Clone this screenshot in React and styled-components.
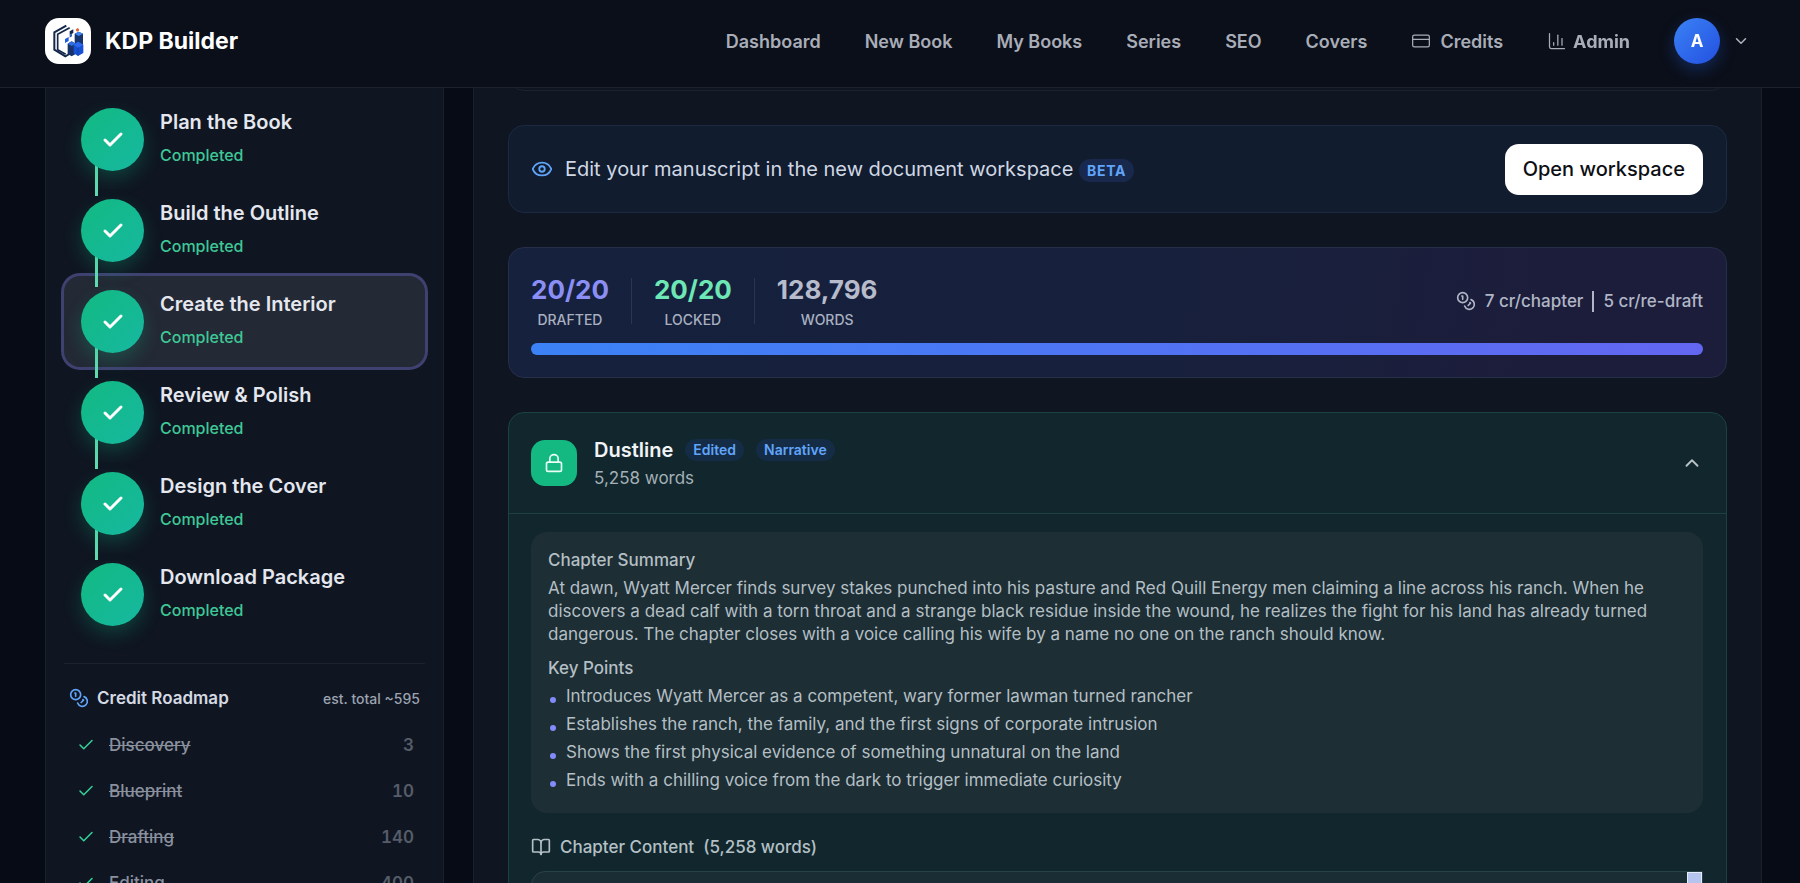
import React from 'react';
import styled, { createGlobalStyle } from 'styled-components';
import {
  BookOpen,
  ChartColumn,
  Check,
  ChevronDown,
  ChevronUp,
  Coins,
  CreditCard,
  Eye,
  Lock,
} from 'lucide-react';

const NAV_ITEMS = [
  { label: 'Dashboard' },
  { label: 'New Book' },
  { label: 'My Books' },
  { label: 'Series' },
  { label: 'SEO' },
  { label: 'Covers' },
  { label: 'Credits', icon: CreditCard },
  { label: 'Admin', icon: ChartColumn, strong: true },
];

const STEPS = [
  'Plan the Book',
  'Build the Outline',
  'Create the Interior',
  'Review & Polish',
  'Design the Cover',
  'Download Package',
];
const ACTIVE_STEP = 'Create the Interior';

const ROADMAP = [
  { name: 'Discovery', cost: 3 },
  { name: 'Blueprint', cost: 10 },
  { name: 'Drafting', cost: 140 },
  { name: 'Editing', cost: 400 },
];

const KEY_POINTS = [
  'Introduces Wyatt Mercer as a competent, wary former lawman turned rancher',
  'Establishes the ranch, the family, and the first signs of corporate intrusion',
  'Shows the first physical evidence of something unnatural on the land',
  'Ends with a chilling voice from the dark to trigger immediate curiosity',
];

const LogoMark = () => (
  <svg width="31" height="34" viewBox="40 32 93 102" aria-hidden="true">
    <g fill="none" stroke="#14284b">
      <path d="M80 37 44 57v52l33 20 12-7" strokeWidth="6" />
      <path d="M90 43 54 63v46l24 14" strokeWidth="5" />
    </g>
    <path d="M90 54l11-6v11l-11 6z" fill="#14284b" />
    <path d="M76 77l11-6v12l-11 6z" fill="#1d5fe0" />
    <path d="M90 65l7-4v8l-7 4z" fill="#2d5fb8" />
    <path d="M105 61l12-6 13 6v33h-25z" fill="#17346c" />
    <path d="M105 61l12-6 13 6-13 7z" fill="#3f86f0" />
    <path d="M84 91l12-7 12 7v31l-12 7-12-7z" fill="#173268" />
    <path d="M84 91l12-7 12 7-12 7z" fill="#2f6fe0" />
    <path d="M102 94l13-9 16 9v25l-16 9-13-8z" fill="#1650d4" />
    <path d="M102 94l13-9 16 9-16 9z" fill="#2c68ee" />
    <path d="M115 103v24" stroke="#1a3c90" strokeWidth="2" />
    <path d="M109 48l5-4 4 3v5l-5 3-4-3z" fill="#e2683c" />
  </svg>
);

const Header = () => (
  <HeaderBar>
    <Brand href="#">
      <LogoBox>
        <LogoMark />
      </LogoBox>
      KDP Builder
    </Brand>
    <Nav>
      {NAV_ITEMS.map(({ label, icon: Icon, strong }) => (
        <NavLink key={label} href="#" $strong={strong}>
          {Icon && <Icon size={20} strokeWidth={1.5} />}
          {label}
        </NavLink>
      ))}
      <AccountButton type="button" aria-label="Account menu">
        <Avatar>A</Avatar>
        <ChevronDown size={18} strokeWidth={2} />
      </AccountButton>
    </Nav>
  </HeaderBar>
);

const Sidebar = () => (
  <SidebarPanel>
    <StepList>
      {STEPS.map((step) => (
        <StepItem key={step} $active={step === ACTIVE_STEP}>
          <StepCircle>
            <Check size={24} strokeWidth={3} />
          </StepCircle>
          <div>
            <StepTitle>{step}</StepTitle>
            <StepStatus>Completed</StepStatus>
          </div>
        </StepItem>
      ))}
    </StepList>
    <Roadmap>
      <RoadmapHeader>
        <Coins size={20} strokeWidth={2} />
        <RoadmapTitle>Credit Roadmap</RoadmapTitle>
        <RoadmapTotal>est. total ~595</RoadmapTotal>
      </RoadmapHeader>
      <ul>
        {ROADMAP.map(({ name, cost }) => (
          <RoadmapRow key={name}>
            <Check size={18} strokeWidth={2} />
            <RoadmapName>{name}</RoadmapName>
            <RoadmapCost>{cost}</RoadmapCost>
          </RoadmapRow>
        ))}
      </ul>
    </Roadmap>
  </SidebarPanel>
);

const Chapter = () => (
  <ChapterCard>
    <ChapterHeader>
      <LockBox>
        <Lock size={20} strokeWidth={2} />
      </LockBox>
      <ChapterHeading>
        <TitleRow>
          <ChapterTitle>Dustline</ChapterTitle>
          <Tag>Edited</Tag>
          <Tag>Narrative</Tag>
        </TitleRow>
        <WordCount>5,258 words</WordCount>
      </ChapterHeading>
      <CollapseButton type="button" aria-label="Collapse chapter">
        <ChevronUp size={22} strokeWidth={2} />
      </CollapseButton>
    </ChapterHeader>
    <ChapterBody>
      <SummaryBox>
        <SummaryHeading>Chapter Summary</SummaryHeading>
        <SummaryText>
          At dawn, Wyatt Mercer finds survey stakes punched into his pasture and Red Quill Energy men
          claiming a line across his ranch. When he discovers a dead calf with a torn throat and a
          strange black residue inside the wound, he realizes the fight for his land has already
          turned dangerous. The chapter closes with a voice calling his wife by a name no one on the
          ranch should know.
        </SummaryText>
        <SummaryHeading>Key Points</SummaryHeading>
        <ul>
          {KEY_POINTS.map((point) => (
            <KeyPoint key={point}>{point}</KeyPoint>
          ))}
        </ul>
      </SummaryBox>
      <ContentLabel htmlFor="chapter-content">
        <BookOpen size={20} strokeWidth={2} />
        Chapter Content <span>(5,258 words)</span>
      </ContentLabel>
      <ContentFrame>
        <ContentArea id="chapter-content" />
        <ScrollThumb />
      </ContentFrame>
    </ChapterBody>
  </ChapterCard>
);

const App = () => {
  return (
    <>
      <GlobalStyle />
      <Header />
      <Page>
        <Sidebar />
        <MainPanel>
          <ToolbarCard />
          <WorkspaceCard>
            <Eye size={22} strokeWidth={2} />
            <WorkspaceText>
              Edit your manuscript in the new document workspace <BetaBadge>BETA</BetaBadge>
            </WorkspaceText>
            <OpenButton type="button">Open workspace</OpenButton>
          </WorkspaceCard>
          <ProgressCard>
            <StatsRow>
              <Stat $color="#8b8ff5">
                <strong>20/20</strong>
                <span>Drafted</span>
              </Stat>
              <StatDivider />
              <Stat $color="#6ee7b7">
                <strong>20/20</strong>
                <span>Locked</span>
              </Stat>
              <StatDivider />
              <Stat $color="#b6bccb">
                <strong>128,796</strong>
                <span>Words</span>
              </Stat>
              <Pricing>
                <Coins size={20} strokeWidth={2} />
                <span>7 cr/chapter</span>
                <PricingDivider />
                <span>5 cr/re-draft</span>
              </Pricing>
            </StatsRow>
            <ProgressBar />
          </ProgressCard>
          <Chapter />
        </MainPanel>
      </Page>
    </>
  );
};

export default App;

const GlobalStyle = createGlobalStyle`
  * {
    box-sizing: border-box;
    margin: 0;
    padding: 0;
  }
  html {
    background: #060b16;
  }
  body {
    height: 100vh;
    overflow: hidden;
    font-family: Inter, 'Liberation Sans', sans-serif;
    font-size: 16px;
    color: #e5e7ef;
  }
  ul, ol {
    list-style: none;
  }
  button, textarea {
    font: inherit;
    border: 0;
  }
  svg {
    flex-shrink: 0;
  }
`;

const HeaderBar = styled.header`
  position: fixed;
  top: 0;
  left: 0;
  right: 0;
  z-index: 10;
  height: 88px;
  padding: 0 50px 5px 45px;
  display: flex;
  align-items: center;
  justify-content: space-between;
  background: #0b0f19;
  border-bottom: 1px solid #1b212d;
`;
const Brand = styled.a`
  display: flex;
  align-items: center;
  gap: 14px;
  color: #fff;
  font-size: 23px;
  font-weight: 700;
  text-decoration: none;
`;
const LogoBox = styled.span`
  width: 46px;
  height: 46px;
  border-radius: 14px;
  display: flex;
  align-items: center;
  justify-content: center;
  background: #fff;
`;
const Nav = styled.nav`
  display: flex;
  align-items: center;
  gap: 44px;
`;
const NavLink = styled.a`
  display: flex;
  align-items: center;
  gap: ${({ $strong }) => ($strong ? '6px' : '9px')};
  color: #a9adb8;
  font-size: 18px;
  font-weight: ${({ $strong }) => ($strong ? 700 : 600)};
  text-decoration: none;
`;
const AccountButton = styled.button`
  display: flex;
  align-items: center;
  gap: 12px;
  background: none;
  color: #b1b5c0;
`;
const Avatar = styled.span`
  width: 46px;
  height: 46px;
  border-radius: 50%;
  display: flex;
  align-items: center;
  justify-content: center;
  color: #fff;
  font-size: 17px;
  font-weight: 700;
  background: linear-gradient(135deg, #3b82f6, #2350e0);
  box-shadow: 0 6px 16px rgba(37, 99, 235, 0.3);
`;

const Page = styled.div`
  display: grid;
  grid-template-columns: 399px minmax(0, 1fr);
  gap: 29px;
  padding: 0 38px 0 45px;
`;
const SidebarPanel = styled.aside`
  padding: 94px 18px 0;
  background: #0f1622;
  border: 1px solid #1a202c;
  border-width: 0 1px;
`;
const StepList = styled.ol`
  margin-bottom: 23px;
`;
const StepItem = styled.li`
  position: relative;
  display: flex;
  gap: 16px;
  height: 91px;
  padding: 14px 17px;
  border-radius: 16px;
  background: ${({ $active }) => ($active ? '#232935' : 'transparent')};
  box-shadow: ${({ $active }) => ($active ? '0 0 0 3px #3f4170' : 'none')};

  &:not(:last-child)::after {
    content: '';
    position: absolute;
    z-index: 1;
    left: 31px;
    top: 68px;
    width: 3px;
    height: 34px;
    background: #5fdcae;
  }
`;
const StepCircle = styled.span`
  position: relative;
  z-index: 2;
  flex: none;
  width: 63px;
  height: 63px;
  border-radius: 50%;
  display: flex;
  align-items: center;
  justify-content: center;
  color: #fff;
  background: linear-gradient(135deg, #12b981, #16b8a0);
  box-shadow: 0 8px 18px rgba(16, 185, 129, 0.25);
`;
const StepTitle = styled.h3`
  font-size: 20px;
  line-height: 28px;
  font-weight: 600;
`;
const StepStatus = styled.p`
  margin-top: 8px;
  color: #3fc896;
  font-size: 16px;
  line-height: 23px;
  font-weight: 500;
`;
const Roadmap = styled.section`
  border-top: 1px solid #1b222e;
  padding-top: 22px;
`;
const RoadmapHeader = styled.div`
  display: flex;
  align-items: center;
  height: 24px;
  padding: 0 5px;
  margin-bottom: 12px;
  color: #60a5fa;
`;
const RoadmapTitle = styled.h4`
  margin-left: 8px;
  color: #d5d9e3;
  font-size: 17px;
  font-weight: 600;
`;
const RoadmapTotal = styled.span`
  margin-left: auto;
  color: #9ca3b1;
  font-size: 14px;
  font-weight: 500;
`;
const RoadmapRow = styled.li`
  display: flex;
  align-items: center;
  height: 46px;
  padding: 0 11px 0 13px;
  font-size: 17px;
  font-weight: 500;
  color: #34d399;
`;
const RoadmapName = styled.span`
  margin-left: 14px;
  color: #8a909d;
  text-decoration: line-through;
`;
const RoadmapCost = styled.span`
  margin-left: auto;
  color: #565c69;
  font-weight: 600;
  font-variant-numeric: tabular-nums;
`;

const MainPanel = styled.main`
  padding: 0 34px 34px;
  display: flex;
  flex-direction: column;
  gap: 34px;
  background: #0f1622;
  border: 1px solid #1a202c;
  border-width: 0 1px;
`;
const Card = styled.section`
  border: 1px solid #1f2939;
  border-radius: 16px;
`;
const ToolbarCard = styled(Card)`
  height: 91px;
  border-color: #1b212d;
`;
const WorkspaceCard = styled(Card)`
  display: flex;
  align-items: center;
  gap: 12px;
  height: 88px;
  padding: 0 23px 0 22px;
  color: #60a5fa;
  background: #111c2e;
  border-color: #1b2942;
`;
const WorkspaceText = styled.p`
  flex: 1;
  color: #d0d7e4;
  font-size: 20px;
`;
const BetaBadge = styled.span`
  padding: 3px 8px;
  border-radius: 12px;
  color: #60a5fa;
  background: #18294d;
  font-size: 14px;
  font-weight: 700;
  letter-spacing: 0.05em;
`;
const OpenButton = styled.button`
  height: 51px;
  padding: 0 18px;
  border-radius: 14px;
  background: #fff;
  color: #0d0f14;
  font-size: 20px;
  font-weight: 500;
`;

const ProgressCard = styled(Card)`
  padding: 23px 23px 22px 22px;
  background: linear-gradient(100deg, #15213d, #17203c 55%, #1c1d3b 85%);
  border-color: #262f48;
`;
const StatsRow = styled.div`
  display: flex;
  align-items: center;
  gap: 22px;
  height: 60px;
  margin-bottom: 12px;
`;
const Stat = styled.div`
  display: flex;
  flex-direction: column;
  align-items: center;
  padding-top: 2px;

  strong {
    color: ${({ $color }) => $color};
    font-size: 26px;
    line-height: 36px;
    font-weight: 700;
  }
  span {
    color: #a9b0c0;
    font-size: 14px;
    line-height: 24px;
    font-weight: 500;
    text-transform: uppercase;
  }
`;
const StatDivider = styled.span`
  width: 1px;
  height: 46px;
  background: #2b3550;
`;
const Pricing = styled.div`
  margin-left: auto;
  display: flex;
  align-items: center;
  gap: 9px;
  color: #b0b6c6;
  font-size: 17px;
  font-weight: 500;
`;
const PricingDivider = styled.span`
  width: 2px;
  height: 21px;
  background: #b0b6c6;
`;
const ProgressBar = styled.div`
  height: 12px;
  border-radius: 6px;
  background: linear-gradient(90deg, #3b82f6, #6366f1);
`;

const ChapterCard = styled(Card)`
  background: #11272d;
  border-color: #1a4244;
`;
const ChapterHeader = styled.div`
  display: flex;
  align-items: center;
  gap: 17px;
  height: 101px;
  padding: 0 23px 0 22px;
  border-bottom: 1px solid #1d4143;
`;
const LockBox = styled.span`
  width: 46px;
  height: 46px;
  border-radius: 14px;
  display: flex;
  align-items: center;
  justify-content: center;
  color: #e9fff6;
  background: #13b981;
`;
const ChapterHeading = styled.div`
  flex: 1;
`;
const TitleRow = styled.div`
  display: flex;
  align-items: center;
  gap: 12px;
  height: 30px;
`;
const ChapterTitle = styled.h2`
  color: #f1f4f7;
  font-size: 20px;
  font-weight: 600;
`;
const Tag = styled.span`
  padding: 0 8px;
  border-radius: 12px;
  color: #60a5fa;
  background: #142c45;
  font-size: 14px;
  line-height: 22px;
  font-weight: 600;
`;
const WordCount = styled.p`
  color: #a4b0b6;
  font-size: 17px;
  line-height: 26px;
`;
const CollapseButton = styled.button`
  display: flex;
  background: none;
  color: #b9c3c8;
`;
const ChapterBody = styled.div`
  padding: 18px 23px 23px 22px;
`;
const SummaryBox = styled.div`
  padding: 17px 17px 16px;
  border-radius: 16px;
  background: #1d2e35;
  color: #b4bfc4;
  font-size: 17px;
  line-height: 23px;
`;
const SummaryHeading = styled.h4`
  margin-bottom: 5px;
  font-size: 17px;
  font-weight: 500;
`;
const SummaryText = styled.p`
  margin-bottom: 11px;
`;
const KeyPoint = styled.li`
  display: flex;
  align-items: center;
  gap: 10px;
  margin-bottom: 5px;

  &::before {
    content: '';
    width: 6px;
    height: 6px;
    margin: 7px 0 0 2px;
    border-radius: 50%;
    background: #818cf8;
  }
`;
const ContentLabel = styled.label`
  display: flex;
  align-items: center;
  gap: 9px;
  margin: 22px 0 12px;
  height: 24px;
  color: #b4c0c5;
  font-size: 17px;
  font-weight: 500;
`;
const ContentFrame = styled.div`
  display: flex;
  height: 400px;
  border: 1px solid #28424a;
  border-radius: 14px 0 0 14px;
  background: #1b2d34;
`;
const ContentArea = styled.textarea`
  flex: 1;
  resize: none;
  background: none;
  color: #c5ced2;
`;
const ScrollThumb = styled.span`
  width: 15px;
  border: 1px solid #e4ebfb;
  background: #b5c5ef;
`;
